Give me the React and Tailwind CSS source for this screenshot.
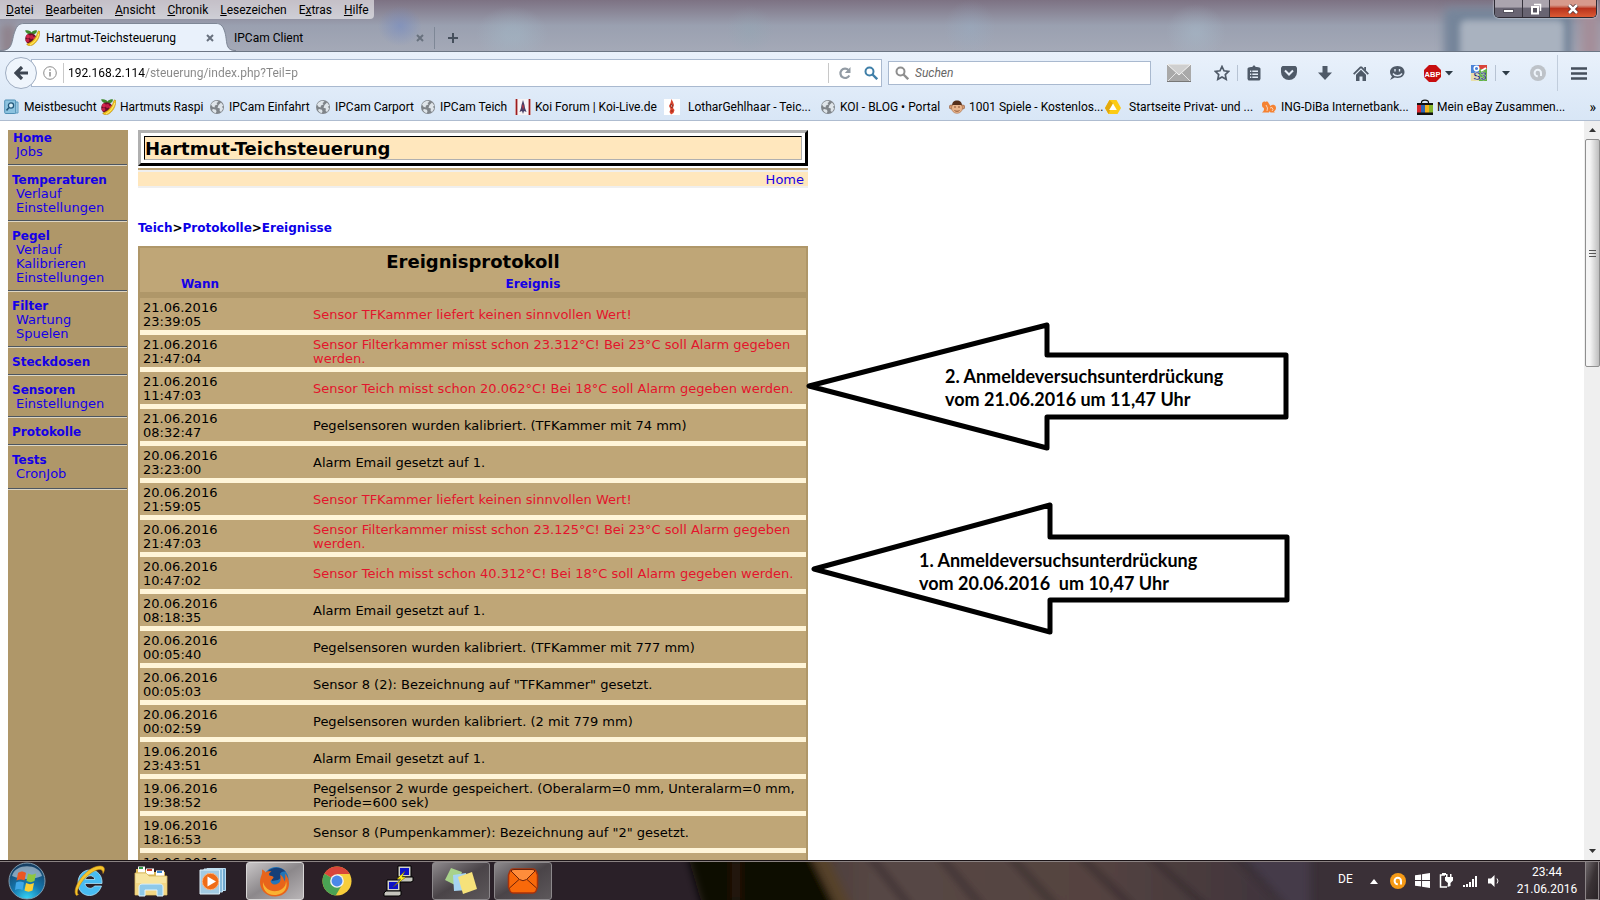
import React from "react";

const sidebar = [
  { title: "Temperaturen", items: ["Verlauf", "Einstellungen"] },
  { title: "Pegel", items: ["Verlauf", "Kalibrieren", "Einstellungen"] },
  { title: "Filter", items: ["Wartung", "Spuelen"] },
  { title: "Steckdosen", items: [] },
  { title: "Sensoren", items: ["Einstellungen"] },
  { title: "Protokolle", items: [] },
  { title: "Tests", items: ["CronJob"] },
];

const events = [
  ["21.06.2016", "23:39:05", "Sensor TFKammer liefert keinen sinnvollen Wert!", true],
  ["21.06.2016", "21:47:04", "Sensor Filterkammer misst schon 23.312°C! Bei 23°C soll Alarm gegeben werden.", true],
  ["21.06.2016", "11:47:03", "Sensor Teich misst schon 20.062°C! Bei 18°C soll Alarm gegeben werden.", true],
  ["21.06.2016", "08:32:47", "Pegelsensoren wurden kalibriert. (TFKammer mit 74 mm)", false],
  ["20.06.2016", "23:23:00", "Alarm Email gesetzt auf 1.", false],
  ["20.06.2016", "21:59:05", "Sensor TFKammer liefert keinen sinnvollen Wert!", true],
  ["20.06.2016", "21:47:03", "Sensor Filterkammer misst schon 23.125°C! Bei 23°C soll Alarm gegeben werden.", true],
  ["20.06.2016", "10:47:02", "Sensor Teich misst schon 40.312°C! Bei 18°C soll Alarm gegeben werden.", true],
  ["20.06.2016", "08:18:35", "Alarm Email gesetzt auf 1.", false],
  ["20.06.2016", "00:05:40", "Pegelsensoren wurden kalibriert. (TFKammer mit 777 mm)", false],
  ["20.06.2016", "00:05:03", 'Sensor 8 (2): Bezeichnung auf "TFKammer" gesetzt.', false],
  ["20.06.2016", "00:02:59", "Pegelsensoren wurden kalibriert. (2 mit 779 mm)", false],
  ["19.06.2016", "23:43:51", "Alarm Email gesetzt auf 1.", false],
  ["19.06.2016", "19:38:52", "Pegelsensor 2 wurde gespeichert. (Oberalarm=0 mm, Unteralarm=0 mm, Periode=600 sek)", false],
  ["19.06.2016", "18:16:53", 'Sensor 8 (Pumpenkammer): Bezeichnung auf "2" gesetzt.', false],
  ["19.06.2016", "18:15:20", "Alarm Email gesetzt auf 1.", false],
];

function Raspberry() {
  return (
    <svg viewBox="0 0 16 16" className="size-4 shrink-0" aria-hidden="true">
      <path d="M1 .5C4-.3 6.500.8 7.500 2.500 8.500.8 11-.3 13 .5 13 3 11 4.500 7.500 4.500S2 3 1 .5z" fill="#3f8a2d" />
      <circle cx="6.800" cy="8.800" r="5.600" fill="#6d1029" />
      <circle cx="4" cy="6.500" r="2" fill="#d3264f" />
      <circle cx="7.500" cy="7" r="2" fill="#c51f48" />
      <circle cx="3.500" cy="10.500" r="1.800" fill="#c51f48" />
      <circle cx="10.500" cy="8" r="1.600" fill="#d3264f" />
      <path d="M14.500.8l1.500 1c-.3 5.500-3 11-8 13.500-2.500 1-5 .3-5.300-1.300C8 12.500 12 8 13.500 2.500z" fill="#f5c81c" stroke="#a87a10" strokeWidth=".5" />
      <path d="M14.800 4c-1.300 4.500-4.500 8.500-8.800 11" stroke="#fff19a" strokeWidth=".8" fill="none" />
    </svg>
  );
}
function Globe() {
  return (
    <svg viewBox="0 0 16 16" className="size-4 shrink-0" aria-hidden="true">
      <circle cx="8" cy="8" r="7" fill="#7f8489" />
      <path d="M2 5.500C3.500 3 5.500 1.800 8 1.800l1.500 1-2 1.200 1 1.500-2.500 1-.5 2-2-.7zM9.500 6l2.500-2.500 2.300 3-1.200 1.200 1 2-2 3.300-1.500-1 .3-2.500-2.400-.8zM4 10l3 .7.500 2-1 1.600C4.500 13.300 3.300 12 3 11z" fill="#dfe5ea" />
    </svg>
  );
}
function Most() {
  return (
    <svg viewBox="0 0 16 16" className="size-4 shrink-0" aria-hidden="true">
      <path d="M11 3h3v11H4" fill="#a9d3ea" stroke="#5d9cc0" />
      <rect x=".7" y="1" width="11" height="13.500" rx="1" fill="#8cc3e0" stroke="#4f8fb5" />
      <circle cx="7" cy="6.500" r="2.600" fill="#d5edf8" stroke="#23587b" strokeWidth="1.300" />
      <path d="M5 8.500L2.500 11.500" stroke="#23587b" strokeWidth="1.600" />
    </svg>
  );
}
function KoiForum() {
  return (
    <svg viewBox="0 0 16 16" className="size-4 shrink-0" aria-hidden="true">
      <rect width="16" height="16" fill="#f6f3f5" />
      <path d="M1.500 0v16M14.500 0v16" stroke="#9c1c1f" strokeWidth="1.800" />
      <path d="M8 1l1.500 5 .5 3 1.500 4-2.500-1L8 15l-1-3-2.500 1L6 9l.5-3z" fill="#463e66" />
      <path d="M7 7l1-2 1 3-1 3z" fill="#b23442" />
    </svg>
  );
}
function Lothar() {
  return (
    <svg viewBox="0 0 16 16" className="size-4 shrink-0" aria-hidden="true">
      <rect width="16" height="16" fill="#fff" />
      <path d="M7.500 0L9 3l1 3-1 3 1.500 2-1 3L7 15.500 5.500 13l1-3L5 7l1.500-3z" fill="#d8432c" />
      <path d="M7 5l1.500 1L8 9 7 8zM7 12h2" stroke="#7b1a10" fill="#fff" strokeWidth=".8" />
    </svg>
  );
}
function Monkey() {
  return (
    <svg viewBox="0 0 16 16" className="size-4 shrink-0" aria-hidden="true">
      <circle cx="2.200" cy="8" r="2" fill="#d49a72" stroke="#8b5232" strokeWidth=".6" />
      <circle cx="13.800" cy="8" r="2" fill="#d49a72" stroke="#8b5232" strokeWidth=".6" />
      <path d="M3 7C3 3 5 1.500 8 1.500S13 3 13 7z" fill="#56301c" />
      <ellipse cx="8" cy="9" rx="5.500" ry="5.300" fill="#e9b58d" stroke="#a56a43" strokeWidth=".6" />
      <path d="M3.500 6C4 3.500 6 2.500 8 2.500S12 3.500 12.500 6z" fill="#56301c" />
      <path d="M5 8h2M9 8h2M5.500 11.500c1.500 1 3.500 1 5 0" stroke="#8a5434" fill="none" strokeWidth="1" />
    </svg>
  );
}
function Commerz() {
  return (
    <svg viewBox="0 0 16 16" className="size-4 shrink-0" aria-hidden="true">
      <path d="M4.500 1h7L16 9l-3.500 6h-9L0 9z" fill="#fccb14" />
      <path d="M4.500 1L8 4.500 3.500 15 0 9z" fill="#e3a90c" />
      <path d="M8 4.500l3.800 6.500H4.200z" fill="#fff" />
    </svg>
  );
}
function Lion() {
  return (
    <svg viewBox="0 0 16 16" className="size-4 shrink-0" aria-hidden="true">
      <path d="M1 5c0-2 2-3 3.500-2 1-.8 2.500-.3 3 1l2 3c1.500-1.800 4.500-1.500 5.300.8.600 2-.3 4-1.800 4.500l.8 1.200H9.500l-1-1.300-.5 1.300H1l1.500-1.500C3.500 10 3 9 2 8.500 1 8 1 6 1 5z" fill="#f58232" />
      <path d="M5 6l1.500 3L6 12M9 9l2-.5 1 2-1 1.500" stroke="#fbd2b2" fill="none" strokeWidth="1" />
    </svg>
  );
}
function Bag() {
  return (
    <svg viewBox="0 0 16 16" className="size-4 shrink-0" aria-hidden="true">
      <path d="M4.500 5V3.500C4.500.3 11.500.3 11.500 3.500V5" fill="none" stroke="#111" strokeWidth="1.200" />
      <rect y="4" width="16" height="2" fill="#111" />
      <rect y="6" width="4" height="8" fill="#d8262c" />
      <rect x="4" y="6" width="4" height="8" fill="#2d64b4" />
      <rect x="8" y="6" width="4" height="8" fill="#f2b21b" />
      <rect x="12" y="6" width="4" height="8" fill="#84b52c" />
      <rect y="13.500" width="16" height="2.500" fill="#111" />
    </svg>
  );
}

const bookmarks = [
  ["Meistbesucht", Most, "w-24 gap-1"],
  ["Hartmuts Raspi", Raspberry, "w-[109px] gap-1"],
  ["IPCam Einfahrt", Globe, "w-[106px] gap-1"],
  ["IPCam Carport", Globe, "w-[105px] gap-1"],
  ["IPCam Teich", Globe, "w-[95px] gap-1"],
  ["Koi Forum | Koi-Live.de", KoiForum, "w-[149px] gap-1"],
  ["LotharGehlhaar - Teic...", Lothar, "w-[156px] gap-2"],
  ["KOI - BLOG • Portal", Globe, "w-[129px] gap-1"],
  ["1001 Spiele - Kostenlos...", Monkey, "w-[156px] gap-1"],
  ["Startseite Privat- und ...", Commerz, "w-[156px] gap-2"],
  ["ING-DiBa Internetbank...", Lion, "w-[156px] gap-1"],
  ["Mein eBay Zusammen...", Bag, "w-[156px] gap-1"],
];

const menus = ["Datei", "Bearbeiten", "Ansicht", "Chronik", "Lesezeichen", "Extras", "Hilfe"];

function Cross() {
  return (
    <svg viewBox="0 0 8 8" className="size-2" aria-hidden="true">
      <path d="M1 1l6 6M7 1L1 7" stroke="#68717e" strokeWidth="2" />
    </svg>
  );
}
function Magnifier({ color }) {
  return (
    <svg viewBox="0 0 14 14" className="size-3.5 shrink-0" aria-hidden="true">
      <circle cx="5.500" cy="5.500" r="4" fill="none" stroke={color} strokeWidth="2" />
      <path d="M8.500 8.500l4.700 4.700" stroke={color} strokeWidth="2.400" />
    </svg>
  );
}
function Caret() {
  return (
    <svg viewBox="0 0 8 5" className="h-[5px] w-2" aria-hidden="true">
      <path d="M0 0h8L4 4.500z" fill="#2d3b46" />
    </svg>
  );
}

function TitleBar() {
  return (
    <header className="relative flex h-[52px] shrink-0 flex-col overflow-hidden border-b border-[#6c7684] bg-linear-to-b from-[#7d7283] via-[#9aa0b0] to-[#a4a9b7]">
      <div className="absolute inset-0 bg-[radial-gradient(ellipse_22px_20px_at_400px_26px,#7088c488_0%,transparent_100%),radial-gradient(ellipse_36px_28px_at_512px_34px,#a3bccb66_20%,transparent_100%),radial-gradient(ellipse_24px_24px_at_750px_30px,#8fa8b455_0%,transparent_100%),radial-gradient(ellipse_26px_28px_at_970px_28px,#97b0c855_0%,transparent_100%),radial-gradient(ellipse_30px_28px_at_1196px_32px,#a9c0d066_10%,transparent_100%)]" />
      <div className="absolute top-2 right-7 h-16 w-32 rounded-md bg-[#75859a] blur-[4px]" />
      <div className="absolute top-5 right-9 h-16 w-26 rounded-md bg-[#a9b2bf] blur-[3px]" />
      <div className="absolute top-2 right-0 h-16 w-5 bg-[#a48d98] blur-[6px]" />
      <div className="absolute top-6 left-0 h-8 w-4 bg-[#8f838d] blur-[4px]" />
      <div className="relative flex h-[19px] items-start justify-between">
        <nav className="flex h-[19px] items-center gap-3 rounded-br-sm bg-white/55 pr-[5px] pl-1.5 leading-4">
          {menus.map((m) => (
            <button key={m} type="button">
              {m === "Extras" ? (
                <>E<u>x</u>tras</>
              ) : (
                <><u>{m[0]}</u>{m.slice(1)}</>
              )}
            </button>
          ))}
        </nav>
        <div className="mr-[3px] flex h-[18px] overflow-hidden rounded-b-[5px] border border-t-0 border-[#2d2a33] shadow-[0_0_2px_#fff]">
          <button type="button" aria-label="Minimieren" className="flex w-7 items-end justify-center border-r border-[#35323b] bg-linear-to-b from-[#aaa4ae] from-40% to-[#686472] to-50% pb-1">
            <span className="h-1 w-[11px] border border-[#55525e] bg-white" />
          </button>
          <button type="button" aria-label="Wiederherstellen" className="flex w-[27px] items-center justify-center border-r border-[#35323b] bg-linear-to-b from-[#aaa4ae] from-40% to-[#686472] to-50%">
            <svg viewBox="0 0 12 12" className="size-3" aria-hidden="true">
              <path d="M4 1.500h6.500V8" fill="none" stroke="#fff" strokeWidth="1.500" />
              <path d="M2 4h6v6.500H2z" fill="#55525e" stroke="#fff" strokeWidth="2" />
            </svg>
          </button>
          <button type="button" aria-label="Schließen" className="flex w-[46px] items-center justify-center bg-linear-to-b from-[#d79a8c] from-30% via-[#b9331c] via-50% to-[#dc5a34]">
            <svg viewBox="0 0 12 10" className="h-2.5 w-3" aria-hidden="true">
              <path d="M2 1l8 8M10 1L2 9" stroke="#4a2a2c" strokeWidth="4" />
              <path d="M2 1l8 8M10 1L2 9" stroke="#fff" strokeWidth="2.500" />
            </svg>
          </button>
        </div>
      </div>
      <div className="relative mt-auto flex h-7 items-stretch">
        <svg viewBox="0 0 24 28" className="h-7 w-6 shrink-0" aria-hidden="true">
          <path d="M0 28C14 28 11 18 15 8 17 2 20 .5 24 .5V28z" fill="#e9f1fb" />
          <path d="M0 27.500C14 27.500 11 18 15 8 17 2 20 .5 24 .5" fill="none" stroke="#7e8796" />
        </svg>
        <div className="flex w-48 items-center border-t border-[#7e8796] bg-[#e9f1fb]">
          <Raspberry />
          <span className="ml-1.5">Hartmut-Teichsteuerung</span>
          <button type="button" aria-label="Tab schließen" className="mr-0.5 ml-auto"><Cross /></button>
        </div>
        <svg viewBox="0 0 20 28" className="h-7 w-5 shrink-0" aria-hidden="true">
          <path d="M20 28C8 28 12 18 8.500 8 6.500 2 4 .5 0 .5V28z" fill="#e9f1fb" />
          <path d="M20 27.500C8 27.500 12 18 8.500 8 6.500 2 4 .5 0 .5" fill="none" stroke="#7e8796" />
        </svg>
        <div className="mt-1 mb-0.5 -ml-0.5 flex w-[201px] items-center border-r border-[#7e8796] pr-2.5">
          <span>IPCam Client</span>
          <button type="button" aria-label="Tab schließen" className="ml-auto"><Cross /></button>
        </div>
        <button type="button" aria-label="Neuer Tab" className="flex w-9 items-center justify-center pt-0.5">
          <svg viewBox="0 0 10 10" className="size-2.5" aria-hidden="true">
            <path d="M5 0v10M0 5h10" stroke="#454f5c" strokeWidth="2" />
          </svg>
        </button>
      </div>
    </header>
  );
}

function Slot({ label, className, children }) {
  return (
    <button type="button" aria-label={label} className={"flex h-8 shrink-0 items-center justify-center " + className}>
      {children}
    </button>
  );
}

function Toolbar() {
  return (
    <div className="flex h-[42px] shrink-0 items-center pl-[5px]">
      <button type="button" aria-label="Zurück" className="z-10 flex size-8 shrink-0 items-center justify-center rounded-full border border-[#9fadc1] bg-[#eff5fc]">
        <svg viewBox="0 0 14 14" className="size-3.5" aria-hidden="true">
          <path d="M8 1L2 7l6 6M2 7h12" fill="none" stroke="#3d4652" strokeWidth="3.200" />
        </svg>
      </button>
      <div className="-ml-1.5 flex h-7 flex-1 items-center border border-[#a9b9cf] bg-white pl-[11px]">
        <svg viewBox="0 0 14 14" className="size-3.5 shrink-0" aria-hidden="true">
          <circle cx="7" cy="7" r="6.300" fill="none" stroke="#8c8c8c" />
          <path d="M7 6v4.500M7 3.300v1.500" stroke="#8c8c8c" strokeWidth="1.500" />
        </svg>
        <span className="mr-1 ml-1.5 h-5 w-px bg-[#c8c8c8]" />
        <input
          aria-label="Adresse"
          defaultValue="192.168.2.114/steuerung/index.php?Teil=p"
          className="h-5 min-w-0 flex-1 bg-[linear-gradient(to_right,#000_77px,#868686_77px)] bg-clip-text text-transparent outline-none"
        />
        <span className="h-5 w-px bg-[#c8c8c8]" />
        <Slot label="Neu laden" className="w-8">
          <svg viewBox="0 0 14 14" className="size-3.5" aria-hidden="true">
            <path d="M11.300 9.500A4.700 4.700 0 1 1 10.500 4" fill="none" stroke="#929ba4" strokeWidth="2.200" />
            <path d="M12.500 1v6H6.800z" fill="#929ba4" />
          </svg>
        </Slot>
        <Slot label="Suche starten" className="w-5"><Magnifier color="#3f7fa8" /></Slot>
      </div>
      <div className="ml-1.5 flex h-6 w-[263px] items-center gap-1.5 border border-[#a9b9cf] bg-white pl-1.5">
        <Magnifier color="#8e8e8e" />
        <input aria-label="Suchen" placeholder="Suchen" className="h-5 min-w-0 flex-1 italic outline-none placeholder:text-[#666]" />
      </div>
      <Slot label="E-Mail" className="ml-1 w-12">
        <svg viewBox="0 0 24 18" className="h-[18px] w-6" aria-hidden="true">
          <rect width="24" height="18" fill="#a9a9a9" />
          <path d="M0 18L9 9M24 18l-9-9" stroke="#e2e2e2" />
          <path d="M0 0l12 11L24 0z" fill="#cfcfcf" stroke="#f5f5f5" />
          <path d="M0 17.500h24" stroke="#777" />
        </svg>
      </Slot>
      <Slot label="Lesezeichen hinzufügen" className="ml-1 w-[30px]">
        <svg viewBox="0 0 16 16" className="size-4" aria-hidden="true">
          <path d="M8 1.500l2 4.300 4.700.6-3.400 3.200.9 4.700L8 12l-4.200 2.300.9-4.700L1.300 6.400 6 5.800z" fill="none" stroke="#4f5a68" strokeWidth="1.700" />
        </svg>
      </Slot>
      <span className="h-4 w-px bg-[#b7c3d3]" />
      <Slot label="Lesezeichen" className="w-[31px]">
        <svg viewBox="0 0 14 16" className="h-4 w-3.5" aria-hidden="true">
          <path d="M4 2h1.500C5.500 0 8.500 0 8.500 2H10l2.500.5 1 1V14l-1 1.500H1.500L.5 14V3.500l1-1z" fill="#4f5a68" />
          <path d="M3 5.500h1.300V7H3zM5.300 5.500H11V7H5.300zM3 8.500h1.300V10H3zM5.300 8.500H11V10H5.300zM3 11.500h1.300V13H3zM5.300 11.500H11V13H5.300z" fill="#e4edf8" />
        </svg>
      </Slot>
      <Slot label="Pocket" className="ml-0.5 w-9">
        <svg viewBox="0 0 16 14" className="h-3.5 w-4" aria-hidden="true">
          <path d="M1.500 0h13L16 1.500V6a8 8 0 0 1-16 0V1.500z" fill="#4f5a68" />
          <path d="M4 4.500l4 4 4-4" fill="none" stroke="#e8f0fa" strokeWidth="2" />
        </svg>
      </Slot>
      <Slot label="Downloads" className="w-9">
        <svg viewBox="0 0 14 14" className="size-3.5" aria-hidden="true">
          <path d="M4.500 0h5v6.500H14L7 14 0 6.500h4.500z" fill="#4f5a68" />
        </svg>
      </Slot>
      <Slot label="Startseite" className="w-9">
        <svg viewBox="0 0 16 15" className="h-[15px] w-4" aria-hidden="true">
          <path d="M8 .8L15.300 8.200M8 .8L.7 8.200" stroke="#4f5a68" strokeWidth="1.800" />
          <path d="M11.200 1H13v4l-1.800-2z" fill="#4f5a68" />
          <path d="M8 3.800l5 5V15H9.500v-4.500h-3V15H3V8.800z" fill="#4f5a68" />
        </svg>
      </Slot>
      <Slot label="Chat" className="w-9">
        <svg viewBox="0 0 16 14" className="h-3.5 w-4" aria-hidden="true">
          <path d="M8.500 0C13 0 15.500 2.800 15.500 6S13 12 8.500 12c-1 0-2-.2-2.800-.5L1 14l2-3.500C1.800 9.300 1 7.800 1 6c0-3.200 3-6 7.500-6z" fill="#4f5a68" />
          <path d="M6 3v2.500M10.500 3v2.500M4 7.500c2 3 7 3 9 0" stroke="#dfe9f5" strokeWidth="1.400" fill="none" />
        </svg>
      </Slot>
      <Slot label="Adblock Plus" className="ml-1.5 w-[34px] gap-1">
        <svg viewBox="0 0 17 17" className="size-[17px]" aria-hidden="true">
          <path d="M5 0h7l5 5v7l-5 5H5l-5-5V5z" fill="#c70d0f" />
          <text x="8.500" y="11.500" textAnchor="middle" fontSize="7.500" fontWeight="700" fontFamily="Liberation Sans, sans-serif" fill="#fff">ABP</text>
        </svg>
        <Caret />
      </Slot>
      <Slot label="S3 Übersetzer" className="ml-2 w-8">
        <svg viewBox="0 0 16 16" className="size-4" aria-hidden="true">
          <rect width="8" height="8" fill="#4b83d8" />
          <rect x="8" width="8" height="8" fill="#d9453b" />
          <rect y="8" width="8" height="8" fill="#e8dfa8" />
          <rect x="8" y="4" width="8" height="12" fill="#61b146" />
          <circle cx="5.500" cy="3.500" r="2.300" fill="none" stroke="#fff" strokeWidth="1.500" />
          <path d="M10 6l5-3" stroke="#fff" strokeWidth="2" />
          <text x="9" y="15" textAnchor="middle" fontSize="11" fontWeight="700" fontFamily="Liberation Sans, sans-serif" fill="#14246e" stroke="#fff" strokeWidth=".3">S3</text>
        </svg>
      </Slot>
      <span className="h-4 w-px bg-[#b7c3d3]" />
      <Slot label="Übersetzer-Optionen" className="w-[19px]"><Caret /></Slot>
      <Slot label="Avast" className="ml-1 w-[38px]">
        <svg viewBox="0 0 16 16" className="size-4" aria-hidden="true">
          <circle cx="8" cy="8" r="8" fill="#bdc2c8" />
          <path d="M11 11V8a3.200 3.200 0 1 0-3.200 3.200" fill="none" stroke="#edf3fa" strokeWidth="2" />
        </svg>
      </Slot>
      <span className="h-9 w-px bg-[#c1cddc]" />
      <Slot label="Menü" className="w-[42px]">
        <svg viewBox="0 0 16 13" className="h-[13px] w-4" aria-hidden="true">
          <path d="M0 1.500h16M0 6.500h16M0 11.500h16" stroke="#454f5c" strokeWidth="2.500" />
        </svg>
      </Slot>
    </div>
  );
}

function Bookmarks() {
  return (
    <nav className="flex h-[26px] shrink-0 items-center overflow-hidden pl-1 whitespace-nowrap">
      {bookmarks.map(([label, Icon, cls]) => (
        <a key={label} href="#" className={"flex shrink-0 items-center " + cls}>
          <Icon />
          <span>{label}</span>
        </a>
      ))}
      <button type="button" aria-label="Weitere Lesezeichen" className="mr-1 ml-auto text-sm">»</button>
    </nav>
  );
}

function Sidebar() {
  return (
    <nav className="w-[120px] shrink-0 bg-[#af9769] text-[13px] leading-[14px] text-[#1500e6]">
      <div className="flex flex-col items-start pt-px pb-[5px] pl-[5px]">
        <a href="#" className="text-xs leading-[14px] font-bold">Home</a>
        <a href="#" className="pl-[3px]">Jobs</a>
      </div>
      <hr className="mr-px border-t border-b border-t-[#4c5560] border-b-[#ddd5c3]" />
      {sidebar.map((g) => (
        <div key={g.title} className="group">
          <div className="flex flex-col items-start pt-[7px] pb-[5px] pl-1 group-last:pb-[7px]">
            <a href="#" className="text-xs leading-[14px] font-bold">{g.title}</a>
            {g.items.map((i) => (
              <a key={i} href="#" className="pl-1">{i}</a>
            ))}
          </div>
          <hr className="mr-px border-t border-b border-t-[#4c5560] border-b-[#ddd5c3]" />
        </div>
      ))}
    </nav>
  );
}

function Main() {
  return (
    <main className="w-[670px] shrink-0 text-[13px] leading-[14px]">
      <div className="border-3 border-t-[#b0b0b0] border-r-black border-b-black border-l-[#b0b0b0] p-[3px]">
        <h1 className="border border-t-black border-r-[#b0b0b0] border-b-[#b0b0b0] border-l-black bg-[#ffe7bd] pt-0.5 text-lg leading-5 font-bold">Hartmut-Teichsteuerung</h1>
      </div>
      <div className="mt-0.5 h-0.5 bg-[#bfa677]" />
      <div className="border-y-2 border-[#efefef] bg-[#ffe7bd] pt-0.5 pr-1 text-right leading-3">
        <a href="#" className="text-[#1500e6]">Home</a>
      </div>
      <div className="mt-[33px] text-xs leading-[14px] font-bold">
        <a href="#" className="text-[#0c00e8]">Teich</a>&gt;<a href="#" className="text-[#0c00e8]">Protokolle</a>&gt;<a href="#" className="text-[#0c00e8]">Ereignisse</a>
      </div>
      <table aria-label="Ereignisprotokoll" className="mt-[11px] w-full table-fixed border-separate border-spacing-0 border-2 border-[#af9769] bg-[#bfa677]">
        <colgroup>
          <col className="w-[120px]" />
          <col />
        </colgroup>
        <thead>
          <tr>
            <th colSpan={2} className="h-7 p-0 text-center align-middle text-lg leading-[22px]">Ereignisprotokoll</th>
          </tr>
          <tr className="text-xs leading-4">
            <th className="border-b-[6px] border-[#af9769] p-0"><a href="#" className="text-[#1500e6]">Wann</a></th>
            <th className="border-b-[6px] border-[#af9769] p-0"><a href="#" className="text-[#1500e6]">Ereignis</a></th>
          </tr>
        </thead>
        <tbody>
          {events.map(([d, t, text, alarm]) => (
            <tr key={d + t}>
              <td className="border-b-[5px] border-[#fff5d9] px-[3px] pt-[3px] pb-px">{d}<br />{t}</td>
              <td className={alarm ? "border-b-[5px] border-[#fff5d9] pt-[3px] pr-2.5 pb-px pl-[53px] text-[#e3142c]" : "border-b-[5px] border-[#fff5d9] pt-[3px] pr-2.5 pb-px pl-[53px]"}>{text}</td>
            </tr>
          ))}
        </tbody>
      </table>
    </main>
  );
}

function Annotations() {
  return (
    <>
      <svg viewBox="0 0 500 340" className="pointer-events-none absolute top-[189px] left-[800px] h-[340px] w-[500px]" aria-hidden="true">
        <path d="M9 76L247 15v30h239v62H247v31z" fill="#fff" stroke="#000" strokeWidth="5" strokeLinejoin="round" />
        <path d="M14 259L250 195v32h237v63H250v32z" fill="#fff" stroke="#000" strokeWidth="5" strokeLinejoin="round" />
      </svg>
      <p className="absolute top-[244px] left-[945px] font-[Lato,sans-serif] text-lg leading-[23px] font-bold whitespace-pre">{"2. Anmeldeversuchsunterdrückung\nvom 21.06.2016 um 11,47 Uhr"}</p>
      <p className="absolute top-[428px] left-[919px] font-[Lato,sans-serif] text-lg leading-[23px] font-bold whitespace-pre">{"1. Anmeldeversuchsunterdrückung\nvom 20.06.2016  um 10,47 Uhr"}</p>
    </>
  );
}

function Scrollbar() {
  return (
    <div className="flex w-4 shrink-0 flex-col items-center bg-[#efefef]">
      <button type="button" aria-label="Nach oben" className="flex h-[18px] items-center">
        <svg viewBox="0 0 7 4" className="h-1 w-[7px]" aria-hidden="true"><path d="M0 4h7L3.500 0z" fill="#333" /></svg>
      </button>
      <div className="flex h-[228px] w-[15px] flex-col items-center justify-center gap-0.5 rounded-[2px] border border-[#8f8f8f] bg-linear-to-r from-[#f5f5f5] from-30% to-[#bebebe]">
        <span className="h-px w-[7px] bg-[#555]" />
        <span className="h-px w-[7px] bg-[#555]" />
        <span className="h-px w-[7px] bg-[#555]" />
      </div>
      <button type="button" aria-label="Nach unten" className="mt-auto flex h-[18px] items-center">
        <svg viewBox="0 0 7 4" className="h-1 w-[7px]" aria-hidden="true"><path d="M0 0h7L3.500 4z" fill="#333" /></svg>
      </button>
    </div>
  );
}

function Windows({ className }) {
  return (
    <svg viewBox="0 0 16 16" className={className} aria-hidden="true">
      <path d="M0 2.500l6.500-1v6H0zM7.500 1.300L16 0v7.500H7.500zM0 8.500h6.500v6l-6.500-1zM7.500 8.500H16V16l-8.500-1.300z" fill="#fff" />
    </svg>
  );
}

function Taskbar() {
  return (
    <footer className="relative flex h-10 shrink-0 items-stretch overflow-hidden border-t border-[#1b1417] bg-[#2a2126] text-white">
      <svg viewBox="0 0 1600 40" preserveAspectRatio="none" className="absolute inset-0 h-full w-full" aria-hidden="true">
        <defs>
          <filter id="soft" x="-5%" y="-50%" width="110%" height="200%"><feGaussianBlur stdDeviation="4" /></filter>
          <linearGradient id="wood" x1="0" x2="1">
            <stop offset="0" stopColor="#4a3d3a" /><stop offset=".15" stopColor="#574745" /><stop offset=".6" stopColor="#544340" /><stop offset="1" stopColor="#3e333b" />
          </linearGradient>
        </defs>
        <rect width="1600" height="40" fill="#2a2028" />
        <rect x="1200" width="400" height="40" fill="#3a3037" />
        <g filter="url(#soft)">
          <path d="M685 -15H806L840 55H705z" fill="#0e0905" />
          <path d="M732 0h8v40h-8z" fill="#2a1608" />
          <path d="M806 -15H1220L1290 55H840z" fill="url(#wood)" />
          <path d="M806 -15l34 70h16L824 -15z" fill="#57422c" />
          <path d="M870 -5l40 52M940 -5l42 52M1010 -5l46 52M1080 -5l52 52M1150 -5l56 52" stroke="#2f2428" strokeWidth="6" opacity=".7" />
          <path d="M1235 -15h75v70h-15z" fill="#443b48" />
        </g>
        <path d="M0 .5h1600" stroke="#8d8585" />
      </svg>
      <div className="relative flex items-stretch gap-1 pt-px pl-[3px]">
        <button type="button" aria-label="Start" className="flex w-12 items-center justify-center">
          <svg viewBox="0 0 38 38" className="size-[38px]" aria-hidden="true">
            <defs>
              <radialGradient id="orb" cx=".5" cy="1" r="1"><stop offset="0" stopColor="#37d7f7" /><stop offset=".45" stopColor="#1476ad" /><stop offset="1" stopColor="#15395c" /></radialGradient>
            </defs>
            <circle cx="19" cy="19" r="18" fill="url(#orb)" stroke="#7e9cb0" />
            <path d="M4 14C7 1 31 1 34 14 25 18 13 18 4 14z" fill="#dce8f0" opacity=".55" />
            <path d="M10 11c3-2 5-2 8 0l-1.500 7.500c-3-1.500-5-1.500-8 0z" fill="#ea5723" />
            <path d="M20 11.500c3 1.500 5 1.500 8 0l-1.500 7.500c-3 1.500-5 1.500-8 0z" fill="#8ec63f" />
            <path d="M8 20.500c3-1.500 5-1.500 8 0L14.500 28c-3-1.500-5-1.500-7.500 0z" fill="#3fa7e8" />
            <path d="M18 21c3 1.500 5 1.500 8 0l-1.500 7.500c-3 1.500-5 1.500-8 0z" fill="#fdd033" />
          </svg>
        </button>
        <button type="button" aria-label="Internet Explorer" className="ml-[5px] flex w-[58px] items-center justify-center">
          <svg viewBox="0 0 32 32" className="size-8" aria-hidden="true">
            <path d="M29 18.500H12c.3 5 7 6.500 9.500 2.500h7C26 28 21 30.500 16.500 30.500 9.500 30.500 5 25 5 18 5 10.500 10 5 17 5c8 0 12.500 6 12 13.500zM12.300 14.500h9.500c-.5-5-8.500-5-9.500 0z" fill="#48bcf2" stroke="#aee5fb" strokeWidth=".8" />
            <path d="M3.500 30.500C-1 26 6 13 15 6 21 1 28 0 30.500 2c1.500 1.500 1 4-.5 6.500 0-3-1.500-4.500-4-4-5 .5-13 6.500-17.500 13C5 23 3 28 5.500 29.500z" fill="#f6c52c" stroke="#c88c12" strokeWidth=".6" />
          </svg>
        </button>
        <button type="button" aria-label="Explorer" className="flex w-[58px] items-center justify-center">
          <svg viewBox="0 0 34 32" className="h-8 w-[34px]" aria-hidden="true">
            <path d="M2 4h9l2 3h18v22H2z" fill="#d9b755" />
            <rect x="4" y="1.500" width="7" height="6" fill="#fff" /><rect x="5" y="2" width="4" height="2" fill="#2f9a46" />
            <rect x="12" y="3.500" width="8" height="6" fill="#fff" /><rect x="13" y="4" width="5" height="2" fill="#d2432f" />
            <rect x="22" y="5.500" width="8" height="6" fill="#fff" /><rect x="23" y="6" width="5" height="2" fill="#3b87cf" />
            <path d="M1 8h11l3 3h18v19H1z" fill="#f7e5a0" stroke="#d8b65b" strokeWidth=".8" />
            <path d="M1 18h32v12H1z" fill="#efd17b" opacity=".7" />
            <path d="M5 31V22c0-2 1.500-3 3-3h18c2 0 3 1 3 3v9h-6v-6H11v6z" fill="#8ec9ea" stroke="#e1f4fd" />
          </svg>
        </button>
        <button type="button" aria-label="Media Player" className="flex w-[58px] items-center justify-center">
          <svg viewBox="0 0 28 28" className="size-7" aria-hidden="true">
            <path d="M8 1.500h18.500v22H8z" fill="#6fa8cf" stroke="#b8dbf0" />
            <path d="M5 2h18.500v23H5z" fill="#86bbdd" stroke="#c5e3f4" />
            <path d="M1 3h19.500v24H1z" fill="#a3cbe3" stroke="#e1f1fa" />
            <circle cx="11.500" cy="14.500" r="8.200" fill="#ef6c17" stroke="#fbb27c" />
            <path d="M8.500 9.500l8.500 5-8.500 5z" fill="#fff" />
          </svg>
        </button>
        <button type="button" aria-label="Firefox" className="flex w-[58px] items-center justify-center rounded-[3px] border border-[#d8d6d6] bg-linear-to-br from-[#c9c6c7] via-[#8c888b] to-[#b9b5b7]">
          <svg viewBox="0 0 32 32" className="size-8" aria-hidden="true">
            <circle cx="17" cy="14.500" r="12.500" fill="#2275b8" />
            <path d="M9 6c4-4 13-5 18 1-3-1-5 0-6 2 2 3 0 5-2 6l-6 1z" fill="#163f78" />
            <path d="M3 4.500c1.500.5 3 1.500 3.500 3 2-1.500 4-1.500 6-1-2 1-3 2.500-2.500 4 2 .5 4 .5 4.500 1.500.3 1.500-2 2.500-3 4 .5 3 4 4.500 7.500 2.500 3-1.500 3-6 2-9 3 2 4 4.500 4.500 7 1-2.500 1-5.500.5-8 7 7 5.500 22.500-9.500 23C6 31.500 1 24 1 17c0-4 1.500-6 2-8.500.3-1.500 0-2.500 0-4z" fill="#e8641b" />
            <path d="M4 17c2 8 11 12 19 7 3-2 4-5 4-8 2 6-1 13-10 14S3 24 4 17z" fill="#f9b233" />
          </svg>
        </button>
        <button type="button" aria-label="Chrome" className="flex w-[58px] items-center justify-center">
          <svg viewBox="0 0 32 32" className="size-[30px]" aria-hidden="true">
            <circle cx="16" cy="16" r="15.500" fill="#f7cd3b" />
            <path d="M16 16L2.600 8.200A15.500 15.500 0 0 1 29.500 8.500H16z" fill="#d9453a" />
            <path d="M16 16L2.600 8.200a15.500 15.500 0 0 0 12 23.200L22 19z" fill="#4aa254" />
            <circle cx="16" cy="16" r="7.300" fill="#f2f2f2" />
            <circle cx="16" cy="16" r="5.800" fill="#4b88e8" />
          </svg>
        </button>
        <button type="button" aria-label="PuTTY" className="flex w-[58px] items-center justify-center">
          <svg viewBox="0 0 32 32" className="size-8" aria-hidden="true">
            <path d="M15 1h13v11H15z" fill="#d2d2cb" stroke="#000" /><path d="M17 3h9v7h-9z" fill="#0d12c8" />
            <path d="M14 14l2-2h14v4l-2 1H14z" fill="#c6c6be" stroke="#000" />
            <path d="M4 15h13v11H4z" fill="#d2d2cb" stroke="#000" /><path d="M6 17h9v7H6z" fill="#0d12c8" />
            <path d="M1 28l2-2h15v4l-2 1H1z" fill="#c6c6be" stroke="#000" />
            <path d="M22 6l-8 8h4l-8 8 13-10h-4z" fill="#ffed1f" stroke="#5c5400" strokeWidth=".5" />
          </svg>
        </button>
        <button type="button" aria-label="Kurznotizen" className="flex w-[58px] items-center justify-center rounded-[3px] border border-[#8c888b] bg-linear-to-br from-[#8f8b8e] via-[#4a4448] to-[#5d585b]">
          <svg viewBox="0 0 34 28" className="h-7 w-[34px]" aria-hidden="true">
            <path d="M7 1l11 4-5 14L1 13z" fill="#a8d28a" />
            <path d="M9 8l13-2 2 17-14 1z" fill="#a6d4f2" />
            <path d="M14 10l14-5 5 17-14 5z" fill="#f6e27a" />
          </svg>
        </button>
        <button type="button" aria-label="Mail" className="flex w-[58px] items-center justify-center rounded-[3px] border border-[#8c888b] bg-linear-to-br from-[#8f8b8e] via-[#4a4448] to-[#5d585b]">
          <svg viewBox="0 0 32 26" className="h-[26px] w-8" aria-hidden="true">
            <path d="M6 1h20q2 0 3 2l1.500 4v12L29 23q-1 2-3 2H6q-2 0-3-2l-1.500-4V7L3 3q1-2 3-2z" fill="#f8690a" stroke="#a8320a" strokeWidth="1.500" strokeLinejoin="round" />
            <path d="M4 3q1-1.500 3-1.500h18q2 0 3 1.500l-8.500 8.500q-3.500 2.500-7 0z" fill="#ff8d3b" stroke="#6d2208" />
            <path d="M2.500 20L12 11.500M29.500 20L20 11.500" stroke="#6d2208" />
          </svg>
        </button>
      </div>
      <div className="relative ml-auto flex items-center">
        <span className="w-11 pb-1">DE</span>
        <svg viewBox="0 0 8 5" className="mt-0.5 mr-3 -ml-3 h-[5px] w-2" aria-hidden="true"><path d="M0 5h8L4 0z" fill="#fff" /></svg>
        <div className="flex items-center gap-[9px]">
          <svg viewBox="0 0 16 16" className="size-4" aria-hidden="true">
            <circle cx="8" cy="8" r="8" fill="#f59a16" />
            <path d="M11 11.500V8a3.200 3.200 0 1 0-3.200 3.200" fill="none" stroke="#fff" strokeWidth="2" />
          </svg>
          <Windows className="size-[15px]" />
          <svg viewBox="0 0 14 15" className="h-[15px] w-3.5" aria-hidden="true">
            <path d="M6 2H1.500v12H8" fill="none" stroke="#fff" strokeWidth="1.500" /><path d="M3 0h4v2H3z" fill="#fff" />
            <path d="M6 4h8v3.500L11.500 10v3l-3 1 .5-4L6 7.500zM7 1h1.500v3H7zM11 1h1.500v3H11z" fill="#fff" />
          </svg>
          <svg viewBox="0 0 16 12" className="h-3 w-4" aria-hidden="true">
            <path d="M1 10h2v2H1zM4 9h2v3H4zM7 7h2v5H7zM10 4h2v8h-2zM13 1h2v11h-2z" fill="#fff" />
          </svg>
          <svg viewBox="0 0 14 14" className="size-3.5" aria-hidden="true">
            <path d="M1 4.500h3L7.500 1v12L4 9.500H1z" fill="#fff" />
            <path d="M10 4.500q2 2.500 0 5" stroke="#fff" fill="none" />
          </svg>
        </div>
        <button type="button" className="ml-[15px] w-[62px] text-center leading-[17px]">23:44<br />21.06.2016</button>
        <button type="button" aria-label="Desktop anzeigen" className="mr-px ml-[7px] w-[14px] self-stretch border border-[#8c8587] bg-linear-to-br from-[#6e686b] via-[#3a3235] to-[#2a2326]" />
      </div>
    </footer>
  );
}

export default function App() {
  return (
    <div className="flex h-screen flex-col overflow-hidden bg-white font-[Roboto,sans-serif] text-xs text-black">
      <TitleBar />
      <div className="flex shrink-0 flex-col border-b border-[#aebcd0] bg-linear-to-b from-[#e9f1fb] to-[#d8e6f6]">
        <Toolbar />
        <Bookmarks />
      </div>
      <div className="flex min-h-0 flex-1 font-['DejaVu_Sans',sans-serif]">
        <div className="relative flex min-w-0 flex-1 gap-2.5 overflow-hidden pt-[9px] pl-2">
          <Sidebar />
          <Main />
          <Annotations />
        </div>
        <Scrollbar />
      </div>
      <Taskbar />
    </div>
  );
}
